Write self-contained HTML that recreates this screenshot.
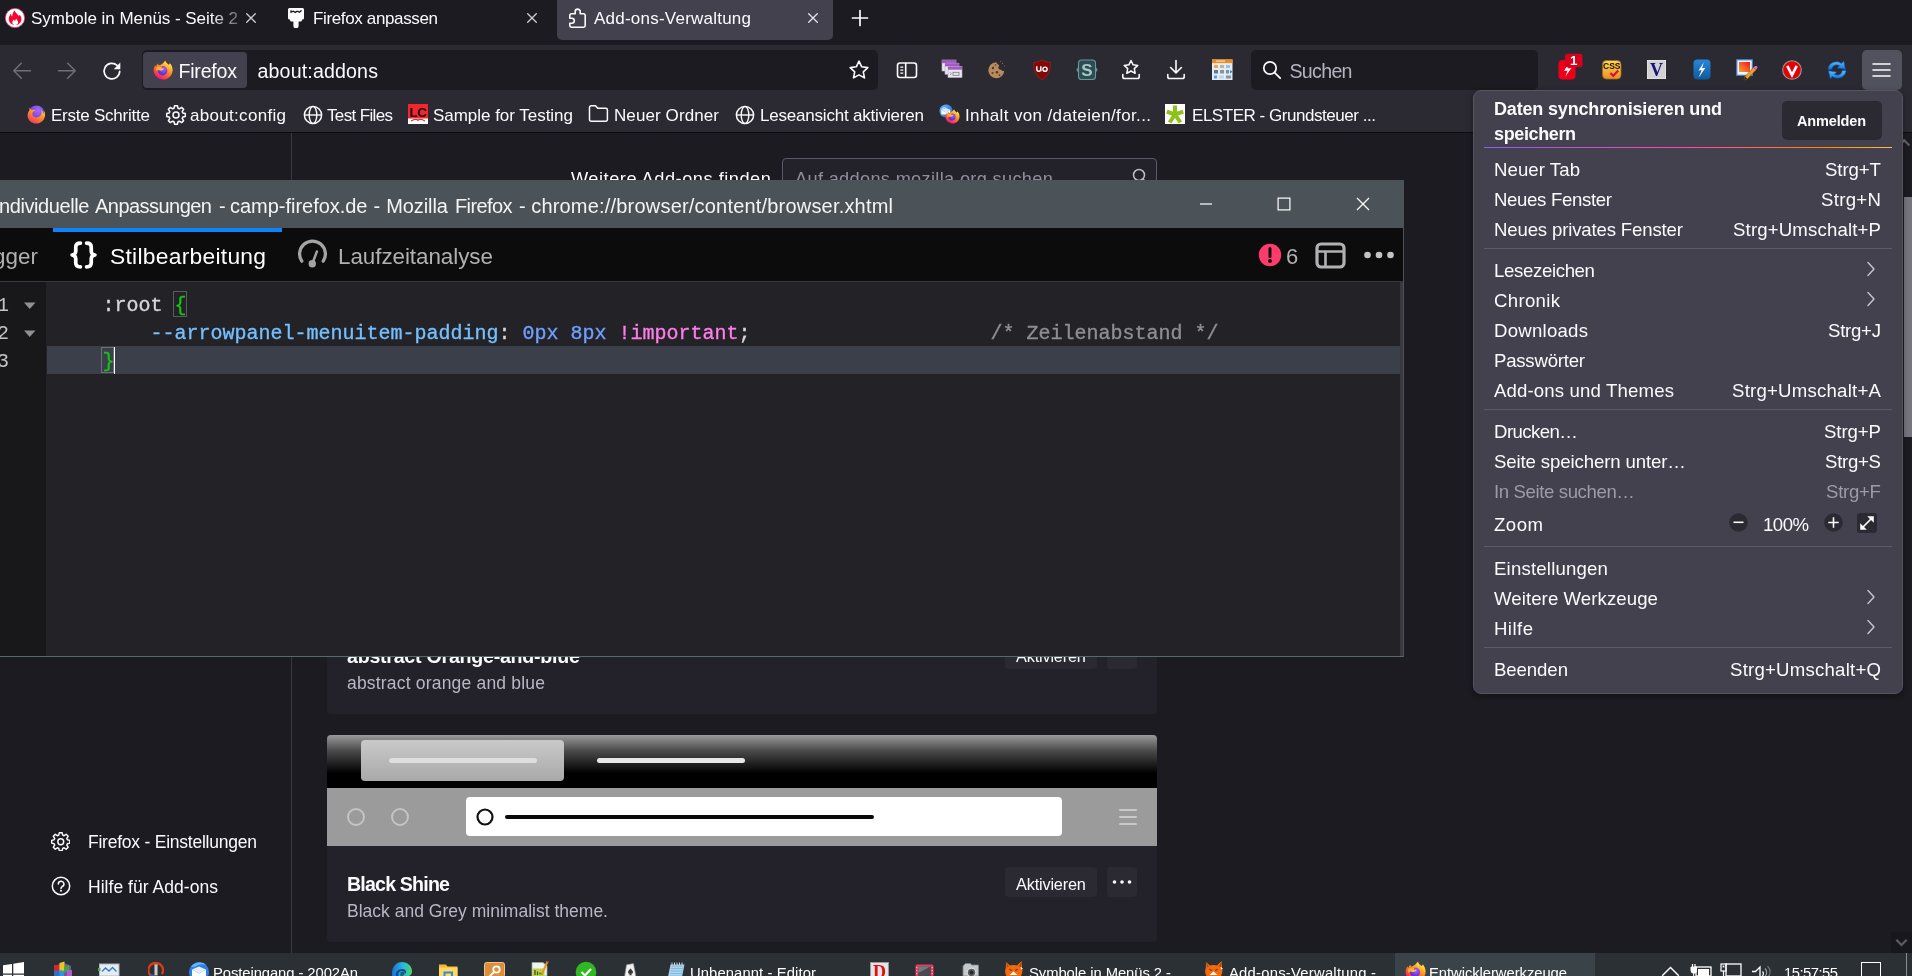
<!DOCTYPE html>
<html><head><meta charset="utf-8"><title>Add-ons-Verwaltung</title>
<style>
html,body{margin:0;padding:0;background:#1c1b22;}
body{width:1912px;height:976px;position:relative;overflow:hidden;font-family:"Liberation Sans",sans-serif;}
#w{left:0;top:0;width:1912px;height:976px;overflow:hidden;transform:translateZ(0);will-change:transform;}
body div,body svg{position:absolute;box-sizing:border-box;}
</style></head><body><div id="w">
<div style="left:0px;top:133px;width:1912px;height:820px;background:#1c1b22;"></div>
<div style="left:291px;top:133px;width:1px;height:820px;background:#393842;"></div>
<div style="left:571px;top:167.00px;font:18.2px/25px 'Liberation Sans',sans-serif;color:#fbfbfe;letter-spacing:0.530px;white-space:pre;">Weitere Add-ons finden</div>
<div style="left:782px;top:158px;width:375px;height:42px;background:#23222b;border:1px solid #5b5a66;border-radius:4px;"></div>
<div style="left:795px;top:166.50px;font:18.2px/25px 'Liberation Sans',sans-serif;color:#8f8e9b;letter-spacing:0.325px;white-space:pre;">Auf addons.mozilla.org suchen</div>
<svg style="left:1131px;top:167px;" width="18" height="18" viewBox="0 0 18 18"><circle cx="8" cy="8" r="5.5" fill="none" stroke="#bfbfc9" stroke-width="1.5"/><path d="M12 12l4 4" stroke="#bfbfc9" stroke-width="1.5"/></svg>
<div style="left:327px;top:560px;width:830px;height:154px;background:#23222b;border-radius:4px;"></div>
<div style="left:347px;top:642.50px;font:bold 19.6px/27px 'Liberation Sans',sans-serif;color:#fbfbfe;letter-spacing:-0.240px;white-space:pre;">abstract Orange-and-blue</div>
<div style="left:347px;top:671.00px;font:17.5px/24px 'Liberation Sans',sans-serif;color:#b8b7c4;letter-spacing:0.191px;white-space:pre;">abstract orange and blue</div>
<div style="left:1005px;top:639px;width:92px;height:30px;background:#2b2a33;border-radius:4px;"></div>
<div style="left:1016px;top:644.50px;font:16.3px/23px 'Liberation Sans',sans-serif;color:#fbfbfe;letter-spacing:-0.174px;white-space:pre;">Aktivieren</div>
<div style="left:1107px;top:639px;width:30px;height:30px;background:#2b2a33;border-radius:4px;"></div>
<div style="left:327px;top:735px;width:830px;height:207px;background:#23222b;border-radius:4px;"></div>
<div style="left:327px;top:735px;width:830px;height:53px;background:linear-gradient(#9a9a9a 0%,#4a4a4a 30%,#000 72%,#000 100%);border-radius:4px 4px 0 0;"></div>
<div style="left:327px;top:788px;width:830px;height:58px;background:#9b9b9b;"></div>
<div style="left:361px;top:740px;width:203px;height:41px;background:linear-gradient(#c9c9c9,#a9a9a9);border-radius:4px;"></div>
<div style="left:389px;top:758px;width:148px;height:5px;background:#dedede;border-radius:3px;"></div>
<div style="left:597px;top:758px;width:148px;height:5px;background:#e6e6e6;border-radius:3px;"></div>
<svg style="left:346px;top:807px;" width="20" height="20" viewBox="0 0 20 20"><circle cx="10" cy="10" r="8" fill="none" stroke="#c4c4c4" stroke-width="2"/></svg>
<svg style="left:390px;top:807px;" width="20" height="20" viewBox="0 0 20 20"><circle cx="10" cy="10" r="8" fill="none" stroke="#c4c4c4" stroke-width="2"/></svg>
<div style="left:466px;top:797px;width:596px;height:39px;background:#fff;border-radius:4px;"></div>
<svg style="left:475px;top:807px;" width="20" height="20" viewBox="0 0 20 20"><circle cx="10" cy="10" r="7.5" fill="none" stroke="#111" stroke-width="2.2"/></svg>
<div style="left:505px;top:815px;width:369px;height:4px;background:#0a0a0a;border-radius:2px;"></div>
<svg style="left:1118px;top:807px;" width="20" height="20" viewBox="0 0 20 20"><path d="M2 3h16M2 10h16M2 17h16" stroke="#c9c9c9" stroke-width="2" stroke-linecap="round"/></svg>
<div style="left:347px;top:870.50px;font:bold 19.6px/27px 'Liberation Sans',sans-serif;color:#fbfbfe;letter-spacing:-0.811px;white-space:pre;">Black Shine</div>
<div style="left:347px;top:899.00px;font:17.5px/24px 'Liberation Sans',sans-serif;color:#b8b7c4;letter-spacing:0.011px;white-space:pre;">Black and Grey minimalist theme.</div>
<div style="left:1005px;top:867px;width:92px;height:30px;background:#2b2a33;border-radius:4px;"></div>
<div style="left:1016px;top:872.50px;font:16.3px/23px 'Liberation Sans',sans-serif;color:#fbfbfe;letter-spacing:-0.174px;white-space:pre;">Aktivieren</div>
<div style="left:1107px;top:867px;width:30px;height:30px;background:#2b2a33;border-radius:4px;"></div>
<svg style="left:1112px;top:879px;" width="20" height="6" viewBox="0 0 20 6"><circle cx="2.5" cy="3" r="1.800" fill="#fbfbfe"/><circle cx="10" cy="3" r="1.800" fill="#fbfbfe"/><circle cx="17.500" cy="3" r="1.800" fill="#fbfbfe"/></svg>
<div style="left:88px;top:830.00px;font:17.5px/24px 'Liberation Sans',sans-serif;color:#fbfbfe;letter-spacing:-0.233px;white-space:pre;">Firefox - Einstellungen</div>
<div style="left:88px;top:875.00px;font:17.5px/24px 'Liberation Sans',sans-serif;color:#fbfbfe;letter-spacing:0.039px;white-space:pre;">Hilfe für Add-ons</div>
<div style="left:1903px;top:133px;width:9px;height:820px;background:#1c1b22;"></div>
<div style="left:1904px;top:197px;width:8px;height:240px;background:#77767e;"></div>
<div style="left:0px;top:0px;width:1912px;height:45px;background:#1c1b22;"></div>
<div style="left:0px;top:45px;width:1912px;height:87px;background:#2b2a33;"></div>
<div style="left:0px;top:132px;width:1912px;height:1px;background:#0c0c0d;"></div>
<div style="left:557px;top:0px;width:276px;height:40px;background:#42414d;border-radius:0 0 5px 5px;"></div>
<div style="left:31px;top:7.00px;font:17px/24px 'Liberation Sans',sans-serif;color:#fbfbfe;letter-spacing:-0.035px;white-space:pre;">Symbole in Menüs - Seite 2</div>
<div style="left:210px;top:4px;width:32px;height:30px;background:linear-gradient(90deg,rgba(28,27,34,0),rgba(28,27,34,.75));"></div>
<div style="left:313px;top:7.00px;font:17px/24px 'Liberation Sans',sans-serif;color:#fbfbfe;letter-spacing:-0.361px;white-space:pre;">Firefox anpassen</div>
<div style="left:594px;top:7.00px;font:17px/24px 'Liberation Sans',sans-serif;color:#fbfbfe;letter-spacing:0.230px;white-space:pre;">Add-ons-Verwaltung</div>
<div style="left:142px;top:50px;width:736px;height:40px;background:#1c1b22;border-radius:5px;"></div>
<div style="left:143px;top:52px;width:104px;height:36px;background:#42414d;border-radius:4px;"></div>
<div style="left:178.5px;top:58.10px;font:19.6px/27px 'Liberation Sans',sans-serif;color:#fbfbfe;letter-spacing:-0.234px;white-space:pre;">Firefox</div>
<div style="left:257.5px;top:58.10px;font:19.6px/27px 'Liberation Sans',sans-serif;color:#fbfbfe;letter-spacing:0.155px;white-space:pre;">about:addons</div>
<div style="left:1251px;top:50px;width:287px;height:40px;background:#1c1b22;border-radius:5px;"></div>
<div style="left:1289.5px;top:58.10px;font:19.6px/27px 'Liberation Sans',sans-serif;color:#b4b3bf;letter-spacing:-0.696px;white-space:pre;">Suchen</div>
<div style="left:1862px;top:50px;width:40px;height:40px;background:#52525e;border-radius:5px;"></div>
<svg style="left:1872px;top:62px;" width="20" height="16" viewBox="0 0 20 16"><path d="M1 2h17M1 8h17M1 14h17" stroke="#fbfbfe" stroke-width="1.6" stroke-linecap="round"/></svg>
<div style="left:51px;top:103.70px;font:17px/24px 'Liberation Sans',sans-serif;color:#fbfbfe;letter-spacing:-0.234px;white-space:pre;">Erste Schritte</div>
<div style="left:190px;top:103.70px;font:17px/24px 'Liberation Sans',sans-serif;color:#fbfbfe;letter-spacing:0.306px;white-space:pre;">about:config</div>
<div style="left:327px;top:103.70px;font:17px/24px 'Liberation Sans',sans-serif;color:#fbfbfe;letter-spacing:-0.644px;white-space:pre;">Test Files</div>
<div style="left:433px;top:103.70px;font:17px/24px 'Liberation Sans',sans-serif;color:#fbfbfe;letter-spacing:-0.029px;white-space:pre;">Sample for Testing</div>
<div style="left:614px;top:103.70px;font:17px/24px 'Liberation Sans',sans-serif;color:#fbfbfe;letter-spacing:0.097px;white-space:pre;">Neuer Ordner</div>
<div style="left:760px;top:103.70px;font:17px/24px 'Liberation Sans',sans-serif;color:#fbfbfe;letter-spacing:-0.201px;white-space:pre;">Leseansicht aktivieren</div>
<div style="left:965px;top:103.70px;font:17px/24px 'Liberation Sans',sans-serif;color:#fbfbfe;letter-spacing:0.371px;white-space:pre;">Inhalt von /dateien/for...</div>
<div style="left:1192px;top:103.70px;font:17px/24px 'Liberation Sans',sans-serif;color:#fbfbfe;letter-spacing:-0.462px;white-space:pre;">ELSTER - Grundsteuer ...</div>
<div style="left:-1px;top:180px;width:1405px;height:477px;background:#232327;border:1px solid #4b5358;border-bottom-color:#5c676c;"></div>
<div style="left:-1px;top:180px;width:1405px;height:48px;background:#4b5358;"></div>
<div style="left:-1px;top:191.70px;font:20px/28px 'Liberation Sans',sans-serif;color:#f4f4f4;letter-spacing:-0.402px;white-space:pre;">ndividuelle</div>
<div style="left:95px;top:191.70px;font:20px/28px 'Liberation Sans',sans-serif;color:#f4f4f4;letter-spacing:-0.533px;white-space:pre;">Anpassungen</div>
<div style="left:219px;top:191.70px;font:20px/28px 'Liberation Sans',sans-serif;color:#f4f4f4;letter-spacing:0.000px;white-space:pre;">-</div>
<div style="left:230px;top:191.70px;font:20px/28px 'Liberation Sans',sans-serif;color:#f4f4f4;letter-spacing:-0.024px;white-space:pre;">camp-firefox.de</div>
<div style="left:373.5px;top:191.70px;font:20px/28px 'Liberation Sans',sans-serif;color:#f4f4f4;letter-spacing:0.000px;white-space:pre;">-</div>
<div style="left:386.2px;top:191.70px;font:20px/28px 'Liberation Sans',sans-serif;color:#f4f4f4;letter-spacing:-0.073px;white-space:pre;">Mozilla</div>
<div style="left:455px;top:191.70px;font:20px/28px 'Liberation Sans',sans-serif;color:#f4f4f4;letter-spacing:-0.604px;white-space:pre;">Firefox</div>
<div style="left:519px;top:191.70px;font:20px/28px 'Liberation Sans',sans-serif;color:#f4f4f4;letter-spacing:0.000px;white-space:pre;">-</div>
<div style="left:531.2px;top:191.70px;font:20px/28px 'Liberation Sans',sans-serif;color:#f4f4f4;letter-spacing:0.195px;white-space:pre;">chrome://browser/content/browser.xhtml</div>
<div style="left:0px;top:228px;width:1403px;height:53px;background:#0c0c0d;"></div>
<div style="left:0px;top:281px;width:1403px;height:1px;background:#38383d;"></div>
<div style="left:53px;top:228px;width:229px;height:4px;background:#0a84ff;"></div>
<div style="left:-7px;top:240.50px;font:22.4px/31px 'Liberation Sans',sans-serif;color:#b1b1b3;letter-spacing:0.055px;white-space:pre;">gger</div>
<div style="left:110px;top:240.00px;font:22.8px/32px 'Liberation Sans',sans-serif;color:#ffffff;letter-spacing:0.278px;white-space:pre;">Stilbearbeitung</div>
<div style="left:338px;top:240.50px;font:22.4px/31px 'Liberation Sans',sans-serif;color:#b1b1b3;letter-spacing:-0.048px;white-space:pre;">Laufzeitanalyse</div>
<div style="left:1286px;top:240.50px;font:22px/31px 'Liberation Sans',sans-serif;color:#b1b1b3;letter-spacing:0.000px;white-space:pre;">6</div>
<div style="left:0px;top:282px;width:46px;height:374px;background:#18181a;"></div>
<div style="left:47px;top:346px;width:1353px;height:28px;background:#3b3f4a;"></div>
<div style="left:1400px;top:282px;width:3px;height:374px;background:#38383d;"></div>
<div style="left:102.4px;top:292.00px;font:20px/28px 'Liberation Mono',monospace;color:#d7d7db;letter-spacing:0.000px;white-space:pre;-webkit-text-stroke:.35px #d7d7db;">:root</div>
<div style="left:174.4px;top:292.00px;font:20px/28px 'Liberation Mono',monospace;color:#14c414;letter-spacing:0.000px;white-space:pre;-webkit-text-stroke:.35px #14c414;">{</div>
<div style="left:150.4px;top:320.00px;font:20px/28px 'Liberation Mono',monospace;color:#75bfff;letter-spacing:0.000px;white-space:pre;-webkit-text-stroke:.35px #75bfff;">--arrowpanel-menuitem-padding</div>
<div style="left:498.4px;top:320.00px;font:20px/28px 'Liberation Mono',monospace;color:#d7d7db;letter-spacing:0.000px;white-space:pre;-webkit-text-stroke:.35px #d7d7db;">:</div>
<div style="left:522.4px;top:320.00px;font:20px/28px 'Liberation Mono',monospace;color:#709fff;letter-spacing:0.000px;white-space:pre;-webkit-text-stroke:.35px #709fff;">0px 8px</div>
<div style="left:618.4px;top:320.00px;font:20px/28px 'Liberation Mono',monospace;color:#ff7de9;letter-spacing:0.000px;white-space:pre;-webkit-text-stroke:.35px #ff7de9;">!important</div>
<div style="left:738.4px;top:320.00px;font:20px/28px 'Liberation Mono',monospace;color:#d7d7db;letter-spacing:0.000px;white-space:pre;-webkit-text-stroke:.35px #d7d7db;">;</div>
<div style="left:990.4px;top:320.00px;font:20px/28px 'Liberation Mono',monospace;color:#8d8d93;letter-spacing:0.000px;white-space:pre;-webkit-text-stroke:.35px #8d8d93;">/* Zeilenabstand */</div>
<div style="left:102.4px;top:348.00px;font:20px/28px 'Liberation Mono',monospace;color:#14c414;letter-spacing:0.000px;white-space:pre;-webkit-text-stroke:.35px #14c414;">}</div>
<div style="left:-3px;top:292.00px;font:20px/28px 'Liberation Mono',monospace;color:#c4c4c8;letter-spacing:-1.002px;white-space:pre;">1</div>
<div style="left:-3px;top:320.00px;font:20px/28px 'Liberation Mono',monospace;color:#c4c4c8;letter-spacing:-1.002px;white-space:pre;">2</div>
<div style="left:-3px;top:348.00px;font:20px/28px 'Liberation Mono',monospace;color:#c4c4c8;letter-spacing:-1.002px;white-space:pre;">3</div>
<div style="left:1473px;top:90px;width:430px;height:604px;background:#42414d;border-radius:8px;border:1px solid #55545f;box-shadow:0 2px 6px rgba(0,0,0,.35);"></div>
<div style="left:1494px;top:96.50px;font:bold 18px/25px 'Liberation Sans',sans-serif;color:#fbfbfe;letter-spacing:-0.169px;white-space:pre;">Daten synchronisieren und</div>
<div style="left:1494px;top:122.20px;font:bold 18px/25px 'Liberation Sans',sans-serif;color:#fbfbfe;letter-spacing:-0.379px;white-space:pre;">speichern</div>
<div style="left:1782px;top:101px;width:100px;height:39px;background:#2b2a33;border-radius:5px;"></div>
<div style="left:1797px;top:111.00px;font:bold 14.5px/20px 'Liberation Sans',sans-serif;color:#fbfbfe;letter-spacing:-0.156px;white-space:pre;">Anmelden</div>
<div style="left:1484px;top:147px;width:408px;height:1px;background:linear-gradient(90deg,#9059ff 0%,#ff4aa2 52%,#ff8c00 85%,#ffbd4f 100%);"></div>
<div style="left:1494px;top:157.00px;font:18.6px/26px 'Liberation Sans',sans-serif;color:#fbfbfe;letter-spacing:0.065px;white-space:pre;">Neuer Tab</div>
<div style="left:1825px;top:157.00px;font:18.6px/26px 'Liberation Sans',sans-serif;color:#fbfbfe;letter-spacing:-0.068px;white-space:pre;">Strg+T</div>
<div style="left:1494px;top:187.00px;font:18.6px/26px 'Liberation Sans',sans-serif;color:#fbfbfe;letter-spacing:-0.333px;white-space:pre;">Neues Fenster</div>
<div style="left:1821px;top:187.00px;font:18.6px/26px 'Liberation Sans',sans-serif;color:#fbfbfe;letter-spacing:0.318px;white-space:pre;">Strg+N</div>
<div style="left:1494px;top:217.00px;font:18.6px/26px 'Liberation Sans',sans-serif;color:#fbfbfe;letter-spacing:-0.157px;white-space:pre;">Neues privates Fenster</div>
<div style="left:1733px;top:217.00px;font:18.6px/26px 'Liberation Sans',sans-serif;color:#fbfbfe;letter-spacing:0.160px;white-space:pre;">Strg+Umschalt+P</div>
<div style="left:1494px;top:258.00px;font:18.6px/26px 'Liberation Sans',sans-serif;color:#fbfbfe;letter-spacing:-0.345px;white-space:pre;">Lesezeichen</div>
<svg style="left:1865px;top:261px;" width="12" height="16" viewBox="0 0 12 16"><path d="M3 1.5l6 6.5-6 6.5" fill="none" stroke="#c8c7d2" stroke-width="1.4" stroke-linecap="round" stroke-linejoin="round"/></svg>
<div style="left:1494px;top:288.00px;font:18.6px/26px 'Liberation Sans',sans-serif;color:#fbfbfe;letter-spacing:0.318px;white-space:pre;">Chronik</div>
<svg style="left:1865px;top:291px;" width="12" height="16" viewBox="0 0 12 16"><path d="M3 1.5l6 6.5-6 6.5" fill="none" stroke="#c8c7d2" stroke-width="1.4" stroke-linecap="round" stroke-linejoin="round"/></svg>
<div style="left:1494px;top:318.00px;font:18.6px/26px 'Liberation Sans',sans-serif;color:#fbfbfe;letter-spacing:0.247px;white-space:pre;">Downloads</div>
<div style="left:1828px;top:318.00px;font:18.6px/26px 'Liberation Sans',sans-serif;color:#fbfbfe;letter-spacing:-0.255px;white-space:pre;">Strg+J</div>
<div style="left:1494px;top:348.00px;font:18.6px/26px 'Liberation Sans',sans-serif;color:#fbfbfe;letter-spacing:-0.226px;white-space:pre;">Passwörter</div>
<div style="left:1494px;top:378.00px;font:18.6px/26px 'Liberation Sans',sans-serif;color:#fbfbfe;letter-spacing:0.147px;white-space:pre;">Add-ons und Themes</div>
<div style="left:1732px;top:378.00px;font:18.6px/26px 'Liberation Sans',sans-serif;color:#fbfbfe;letter-spacing:0.231px;white-space:pre;">Strg+Umschalt+A</div>
<div style="left:1494px;top:419.00px;font:18.6px/26px 'Liberation Sans',sans-serif;color:#fbfbfe;letter-spacing:-0.552px;white-space:pre;">Drucken…</div>
<div style="left:1824px;top:419.00px;font:18.6px/26px 'Liberation Sans',sans-serif;color:#fbfbfe;letter-spacing:-0.076px;white-space:pre;">Strg+P</div>
<div style="left:1494px;top:449.00px;font:18.6px/26px 'Liberation Sans',sans-serif;color:#fbfbfe;letter-spacing:-0.113px;white-space:pre;">Seite speichern unter…</div>
<div style="left:1825px;top:449.00px;font:18.6px/26px 'Liberation Sans',sans-serif;color:#fbfbfe;letter-spacing:-0.276px;white-space:pre;">Strg+S</div>
<div style="left:1494px;top:479.00px;font:18.6px/26px 'Liberation Sans',sans-serif;color:#9c9ba6;letter-spacing:-0.388px;white-space:pre;">In Seite suchen…</div>
<div style="left:1826px;top:479.00px;font:18.6px/26px 'Liberation Sans',sans-serif;color:#9c9ba6;letter-spacing:-0.268px;white-space:pre;">Strg+F</div>
<div style="left:1494px;top:512.00px;font:18.6px/26px 'Liberation Sans',sans-serif;color:#fbfbfe;letter-spacing:0.485px;white-space:pre;">Zoom</div>
<div style="left:1494px;top:556.00px;font:18.6px/26px 'Liberation Sans',sans-serif;color:#fbfbfe;letter-spacing:0.193px;white-space:pre;">Einstellungen</div>
<div style="left:1494px;top:586.00px;font:18.6px/26px 'Liberation Sans',sans-serif;color:#fbfbfe;letter-spacing:0.084px;white-space:pre;">Weitere Werkzeuge</div>
<svg style="left:1865px;top:589px;" width="12" height="16" viewBox="0 0 12 16"><path d="M3 1.5l6 6.5-6 6.5" fill="none" stroke="#c8c7d2" stroke-width="1.4" stroke-linecap="round" stroke-linejoin="round"/></svg>
<div style="left:1494px;top:616.00px;font:18.6px/26px 'Liberation Sans',sans-serif;color:#fbfbfe;letter-spacing:0.447px;white-space:pre;">Hilfe</div>
<svg style="left:1865px;top:619px;" width="12" height="16" viewBox="0 0 12 16"><path d="M3 1.5l6 6.5-6 6.5" fill="none" stroke="#c8c7d2" stroke-width="1.4" stroke-linecap="round" stroke-linejoin="round"/></svg>
<div style="left:1494px;top:657.00px;font:18.6px/26px 'Liberation Sans',sans-serif;color:#fbfbfe;letter-spacing:-0.079px;white-space:pre;">Beenden</div>
<div style="left:1730px;top:657.00px;font:18.6px/26px 'Liberation Sans',sans-serif;color:#fbfbfe;letter-spacing:0.227px;white-space:pre;">Strg+Umschalt+Q</div>
<div style="left:1484px;top:248px;width:408px;height:1px;background:#5b5a66;"></div>
<div style="left:1484px;top:409px;width:408px;height:1px;background:#5b5a66;"></div>
<div style="left:1484px;top:546px;width:408px;height:1px;background:#5b5a66;"></div>
<div style="left:1484px;top:647px;width:408px;height:1px;background:#5b5a66;"></div>
<div style="left:1763px;top:511.70px;font:18.6px/26px 'Liberation Sans',sans-serif;color:#fbfbfe;letter-spacing:-0.524px;white-space:pre;">100%</div>
<svg style="left:1728.5px;top:512.5px;" width="19" height="19" viewBox="0 0 19 19"><circle cx="9.5" cy="9.5" r="9.3" fill="#2b2a33"/><path d="M4.500 9.300h10" stroke="#fbfbfe" stroke-width="1.600"/></svg>
<svg style="left:1823.5px;top:512.5px;" width="19" height="19" viewBox="0 0 19 19"><circle cx="9.500" cy="9.500" r="9.300" fill="#2b2a33"/><path d="M4.300 9.500h10.400M9.500 4.300v10.400" stroke="#fbfbfe" stroke-width="1.600"/></svg>
<svg style="left:1857px;top:513px;" width="20" height="20" viewBox="0 0 20 20"><rect width="20" height="20" rx="3" fill="#2b2a33"/><path d="M5.500 14.500l9-9" stroke="#fbfbfe" stroke-width="1.700"/><path d="M10.200 3.200h6.600v6.600zM3.200 10.200v6.600h6.600z" fill="#fbfbfe"/></svg>
<div style="left:0px;top:953px;width:1912px;height:23px;background:#2b3035;"></div>
<div style="left:1395px;top:953px;width:200px;height:23px;background:#3a4448;"></div>
<div style="left:213px;top:963.10px;font:14.8px/21px 'Liberation Sans',sans-serif;color:#fff;letter-spacing:-0.078px;white-space:pre;">Posteingang - 2002An</div>
<div style="left:690px;top:963.10px;font:14.8px/21px 'Liberation Sans',sans-serif;color:#fff;letter-spacing:0.104px;white-space:pre;">Unbenannt - Editor</div>
<div style="left:1029px;top:963.10px;font:14.8px/21px 'Liberation Sans',sans-serif;color:#fff;letter-spacing:-0.060px;white-space:pre;">Symbole in Menüs 2 -</div>
<div style="left:1229px;top:963.10px;font:14.8px/21px 'Liberation Sans',sans-serif;color:#fff;letter-spacing:0.246px;white-space:pre;">Add-ons-Verwaltung -</div>
<div style="left:1429px;top:963.10px;font:14.8px/21px 'Liberation Sans',sans-serif;color:#fff;letter-spacing:-0.056px;white-space:pre;">Entwicklerwerkzeuge</div>
<div style="left:1784px;top:963.10px;font:14.8px/21px 'Liberation Sans',sans-serif;color:#fff;letter-spacing:-0.516px;white-space:pre;">15:57:55</div>
<div style="left:1906px;top:953px;width:1px;height:23px;background:#8a8e92;"></div>
<svg style="left:5px;top:7.6px;" width="20" height="20" viewBox="0 0 20 20"><circle cx="10" cy="10" r="9.6" fill="#fff" stroke="#f0506a" stroke-width=".8"/><path d="M9.6 2.6c.6 2.4 3.2 3.6 4.3 5.6.4-.5.5-1.100.4-1.800 1.700 1.600 2.400 3.500 2.100 5.600-.400 2.900-2.900 5-6.200 5-3.700 0-6.400-2.600-6.400-6 0-2.100 1-3.800 2.300-5.200 0 1.200.3 2.100 1.100 2.800.1-2.400.9-4.400 2.400-6z" fill="#f5052f"/><path d="M10.300 17c-1.800 0-3-1.100-3-2.600 0-1.300.9-2.100 1.600-3 .2.800.6 1.300 1.200 1.600.2-.9.600-1.600 1.300-2.200.200 1.100 1.800 2 1.800 3.700 0 1.500-1.200 2.500-2.900 2.500z" fill="#fff"/></svg>
<svg style="left:245px;top:11.600000000000001px;" width="12" height="12" viewBox="0 0 12 12"><path d="M1.700 1.700l8.600 8.600M10.300 1.700l-8.600 8.600" stroke="#cfcfd8" stroke-width="1.300" stroke-linecap="round"/></svg>
<svg style="left:526px;top:11.600000000000001px;" width="12" height="12" viewBox="0 0 12 12"><path d="M1.700 1.700l8.600 8.600M10.300 1.700l-8.600 8.600" stroke="#cfcfd8" stroke-width="1.300" stroke-linecap="round"/></svg>
<svg style="left:807px;top:11.600000000000001px;" width="12" height="12" viewBox="0 0 12 12"><path d="M1.700 1.700l8.600 8.600M10.300 1.700l-8.600 8.600" stroke="#e4e4ec" stroke-width="1.300" stroke-linecap="round"/></svg>
<svg style="left:288px;top:8px;" width="16" height="20" viewBox="0 0 16 20"><path d="M1.500 0H14.500a1.500 1.500 0 0 1 1.500 1.500V10a1.500 1.500 0 0 1-1.500 1.500H14v.5a1.500 1.500 0 0 1-1.500 1.500H10.600v4.200a2.600 2.600 0 0 1-5.200 0V13.500H3.500A1.500 1.500 0 0 1 2 12v-.5H1.500A1.500 1.500 0 0 1 0 10V1.500A1.500 1.500 0 0 1 1.500 0z" fill="#fbfbfe"/><path d="M3 2.200v2l2.200-1 2 1.200 2-1.200 2.200 1 1.600-1.200v-1" fill="none" stroke="#1c1b22" stroke-width="1.300"/></svg>
<svg style="left:568px;top:7px;" width="19" height="22" viewBox="0 0 19 22"><path d="M7.200 6.800V4.600a2.500 2.500 0 0 1 5 0V6.800H15.600a1.600 1.600 0 0 1 1.600 1.600V18.600a1.600 1.600 0 0 1-1.600 1.600H3.400a1.600 1.600 0 0 1-1.600-1.600V16.200H3.800a2.500 2.500 0 0 0 0-5H1.800V8.400A1.600 1.600 0 0 1 3.400 6.800z" fill="none" stroke="#fbfbfe" stroke-width="1.600" stroke-linejoin="round"/></svg>
<svg style="left:851px;top:9px;" width="18" height="18" viewBox="0 0 18 18"><path d="M9 1.500v15M1.500 9h15" stroke="#fbfbfe" stroke-width="1.700" stroke-linecap="round"/></svg>
<svg style="left:12px;top:61px;" width="20" height="20" viewBox="0 0 20 20"><path d="M18.500 9.700H2M9.300 2.200L1.800 9.700l7.500 7.500" fill="none" stroke="#6f6e7a" stroke-width="1.500" stroke-linecap="round" stroke-linejoin="round"/></svg>
<svg style="left:57px;top:61px;" width="20" height="20" viewBox="0 0 20 20"><path d="M1.500 9.700H18M10.700 2.200l7.500 7.500-7.500 7.500" fill="none" stroke="#6f6e7a" stroke-width="1.500" stroke-linecap="round" stroke-linejoin="round"/></svg>
<svg style="left:101px;top:60px;" width="22" height="22" viewBox="0 0 22 22"><path d="M18.700 11.300a7.800 7.800 0 1 1-2.600-6" fill="none" stroke="#fbfbfe" stroke-width="1.700" stroke-linecap="round"/><path d="M19.300 2.600v6.600h-6.600z" fill="#fbfbfe"/></svg>
<svg style="left:153px;top:60px;" width="20" height="20" viewBox="0 0 20 20"><defs><linearGradient id="ffga" x1="0.800" y1="0.050" x2="0.250" y2="0.950"><stop offset="0" stop-color="#fff44f"/><stop offset=".3" stop-color="#ffb224"/><stop offset=".6" stop-color="#ff6a2e"/><stop offset=".85" stop-color="#ff3355"/><stop offset="1" stop-color="#e9119a"/></linearGradient><radialGradient id="ffpa" cx=".6" cy=".3" r=".8"><stop offset="0" stop-color="#b25cff"/><stop offset=".6" stop-color="#6a3be0"/><stop offset="1" stop-color="#4428b8"/></radialGradient><linearGradient id="ffha" x1="0" y1="0" x2="1" y2="1"><stop offset="0" stop-color="#ff9a1a"/><stop offset="1" stop-color="#ffd43a"/></linearGradient></defs><path d="M12.300.400c.300 1.700 2 2.900 3.300 4.400.800-.300 1.200-.900 1.100-1.700 2 2 3.100 4.700 2.900 7.600-.400 5-4.500 8.800-9.500 8.800S.600 15.600.600 10.600c0-2.200.700-4.100 1.900-5.600.1.800.3 1.400.700 1.900.2-1.500.9-2.600 1.900-3.400 0 .700.200 1.300.600 1.800 1.700-.300 4.200-1.300 6.600-4.900z" fill="url(#ffga)"/><circle cx="9.600" cy="10.800" r="4.700" fill="url(#ffpa)"/><path d="M3.300 7.200c1.100-.700 2.500-.700 3.500-.2.600-.700 1.700-1 2.800-.8-.9.500-1.300 1.300-1.200 2.100 1.100.3 2 .100 2.600-.400-.200 1.500-1.400 2.500-2.900 2.600-1.300.1-2-.600-3.200-.400-.800.100-1.300.500-1.600 1.100-.500-1.300-.500-2.800 0-4z" fill="url(#ffha)"/></svg>
<svg style="left:848px;top:59px;" width="22" height="22" viewBox="0 0 22 22"><path d="M11 2.200l2.700 5.600 6.100.8-4.500 4.200 1.200 6.100L11 15.900l-5.500 3 1.200-6.100L2.200 8.600l6.100-.8z" fill="none" stroke="#fbfbfe" stroke-width="1.600" stroke-linejoin="round"/></svg>
<svg style="left:896px;top:61px;" width="22" height="18" viewBox="0 0 22 18"><rect x="1.500" y="2" width="19" height="14.500" rx="2.500" fill="none" stroke="#fbfbfe" stroke-width="1.600"/><path d="M9.700 2v14.500" stroke="#fbfbfe" stroke-width="1.600"/><path d="M4.300 6.200h3M4.300 9.200h3M4.300 12.200h3" stroke="#fbfbfe" stroke-width="1.300"/></svg>
<svg style="left:941px;top:59px;" width="22" height="20" viewBox="0 0 22 20"><rect x="1" y="1" width="14" height="11" fill="#e9e6ee" stroke="#b9b2c4" stroke-width=".6"/><rect x="1" y="1" width="14" height="3.200" fill="#a05cc0"/><rect x="4" y="4.2" width="14" height="11" fill="#e9e6ee" stroke="#b9b2c4" stroke-width=".6"/><rect x="4" y="4.2" width="14" height="3.200" fill="#a05cc0"/><rect x="7" y="7.5" width="14" height="11" fill="#e9e6ee" stroke="#b9b2c4" stroke-width=".6"/><rect x="7" y="7.5" width="14" height="3.200" fill="#a05cc0"/><rect x="12" y="13.300" width="6" height="3" fill="none" stroke="#7d7887" stroke-width=".8"/><path d="M9 13.300l1.300 1.400-1.300 1.400" fill="none" stroke="#7d7887" stroke-width=".8"/></svg>
<svg style="left:986px;top:59px;" width="22" height="22" viewBox="0 0 22 22"><path d="M10 3.200a8 8 0 1 0 8.300 8.600c-1.200.5-2.500 0-3-1.100-1.300.3-2.500-.4-2.800-1.600-.3-1.100.1-2 .9-2.600C12 5.600 11 4.600 10 3.200z" fill="#b98a5e"/><circle cx="7" cy="9" r="1.200" fill="#5a3a22"/><circle cx="11" cy="13.200" r="1.300" fill="#5a3a22"/><circle cx="6.500" cy="14" r="1" fill="#5a3a22"/><circle cx="13.500" cy="16.200" r=".9" fill="#5a3a22"/><circle cx="9.500" cy="6" r=".8" fill="#5a3a22"/><circle cx="16.500" cy="4.500" r=".7" fill="#8b6a4a"/><circle cx="18.500" cy="7" r=".6" fill="#8b6a4a"/><circle cx="14.500" cy="2.500" r=".6" fill="#8b6a4a"/></svg>
<svg style="left:1032px;top:59px;" width="20" height="22" viewBox="0 0 20 22"><path d="M10 .8c2.600 1.700 5.400 2.500 8.600 2.600 0 7.800-2.200 13.500-8.600 17.600C3.600 16.900 1.400 11.200 1.400 3.400 4.600 3.300 7.400 2.500 10 .8z" fill="#800a0a" stroke="#a32020" stroke-width=".7"/><path d="M4.800 7.300v3a2 2 0 0 0 4 0v-3M8.800 7.300v5" fill="none" stroke="#fff" stroke-width="1.400"/><circle cx="13" cy="10.200" r="2.100" fill="none" stroke="#fff" stroke-width="1.400"/></svg>
<svg style="left:1076px;top:59px;" width="22" height="22" viewBox="0 0 22 22"><rect x="2.500" y="1" width="17" height="19.500" rx="3" fill="#2c4c52" stroke="#6b979b" stroke-width="1.100"/><path d="M2.500 8.500L1 10.700l1.500 2.200M19.500 8.500L21 10.700l-1.500 2.200" fill="none" stroke="#6b979b" stroke-width="1.200"/><text x="11" y="17" font-family="Liberation Sans" font-weight="bold" font-size="17" fill="#a9c9c9" text-anchor="middle">S</text></svg>
<svg style="left:1121px;top:59px;" width="20" height="21" viewBox="0 0 20 21"><path d="M10 1.500l2.100 4.300 4.700.6-3.500 3.200.9 4.700L10 12l-4.200 2.300.9-4.700L3.200 6.400l4.700-.6z" fill="none" stroke="#fbfbfe" stroke-width="1.500" stroke-linejoin="round"/><path d="M1.800 15.500v2.200a1.800 1.800 0 0 0 1.800 1.800h12.800a1.800 1.800 0 0 0 1.800-1.800v-2.200" fill="none" stroke="#fbfbfe" stroke-width="1.600" stroke-linecap="round"/></svg>
<svg style="left:1166px;top:59px;" width="20" height="21" viewBox="0 0 20 21"><path d="M10 1.500v12M4.600 8.500L10 13.900l5.400-5.400" fill="none" stroke="#fbfbfe" stroke-width="1.600" stroke-linecap="round" stroke-linejoin="round"/><path d="M1.800 15.500v2.200a1.800 1.800 0 0 0 1.800 1.800h12.800a1.800 1.800 0 0 0 1.800-1.800v-2.200" fill="none" stroke="#fbfbfe" stroke-width="1.600" stroke-linecap="round"/></svg>
<svg style="left:1212px;top:59px;" width="21" height="22" viewBox="0 0 21 22"><rect x="0" y=".5" width="20.500" height="20.500" fill="#dfeefb"/><rect x="0" y=".5" width="20.500" height="3.600" fill="#f08a1c"/><rect x="4" y="1.500" width="9" height="1.200" fill="#ffd9a8"/><rect x="2" y="6" width="4" height="3" fill="#f3a54a"/><rect x="8" y="6" width="4" height="3" fill="#c9b28f"/><rect x="14" y="6" width="4" height="3" fill="#9fc0e6"/><rect x="2" y="11" width="4" height="3.500" fill="#6d7480"/><rect x="8" y="11" width="4" height="3.500" fill="#8a929c"/><rect x="14" y="11" width="3" height="3.500" fill="#7d8ea2"/><path d="M18 11l2.500 1.800L18 14.500z" fill="#2e7bd6"/><rect x="2" y="16.500" width="3" height="3" fill="#5b9de0"/><rect x="7" y="16.500" width="5" height="3" fill="#c8d2dc"/><rect x="14" y="16.500" width="5" height="3" fill="#8b939b"/></svg>
<svg style="left:1262px;top:60px;" width="20" height="20" viewBox="0 0 20 20"><circle cx="8" cy="8" r="6.200" fill="none" stroke="#fbfbfe" stroke-width="1.700"/><path d="M12.600 12.600l5.600 5.600" stroke="#fbfbfe" stroke-width="1.800" stroke-linecap="round"/></svg>
<svg style="left:1557px;top:53px;" width="27" height="28" viewBox="0 0 27 28"><rect x="1.500" y="7" width="17" height="19.500" rx="4" fill="#f00018"/><path d="M11.500 10.500l-4.500 7.500 3.600-.5-2.200 6 6-8.500-3.800.4z" fill="#fff"/><rect x="8" y=".8" width="17.500" height="13.500" rx="2.500" fill="#d7001d"/><text x="16.800" y="12.300" font-family="Liberation Sans" font-weight="bold" font-size="13.500" fill="#fff" text-anchor="middle">1</text></svg>
<svg style="left:1602px;top:60px;" width="20" height="20" viewBox="0 0 20 20"><defs><linearGradient id="cssg" x1="0" y1="0" x2="0" y2="1"><stop offset="0" stop-color="#ffd84a"/><stop offset="1" stop-color="#e8902a"/></linearGradient></defs><rect x=".5" y=".5" width="18.500" height="18.500" rx="4" fill="url(#cssg)" stroke="#a86414" stroke-width=".8"/><text x="9.800" y="9.300" font-family="Liberation Sans" font-weight="bold" font-size="8.500" fill="#111" text-anchor="middle">CSS</text><path d="M8.500 13l2.700 2.800 5-5.300" fill="none" stroke="#e01030" stroke-width="2.200"/></svg>
<svg style="left:1647px;top:60px;" width="19" height="19" viewBox="0 0 19 19"><rect x="0" y="0" width="19" height="19" fill="#d2d2d2" stroke="#efefef" stroke-width="1"/><text x="9.500" y="15.500" font-family="Liberation Serif" font-weight="bold" font-size="18" fill="#14147e" text-anchor="middle">V</text></svg>
<svg style="left:1693px;top:59px;" width="18" height="21" viewBox="0 0 18 21"><defs><linearGradient id="blg" x1="0" y1="0" x2="0" y2="1"><stop offset="0" stop-color="#2a86d8"/><stop offset="1" stop-color="#0c5aa0"/></linearGradient></defs><rect x=".5" y=".5" width="17" height="20" rx="4" fill="url(#blg)"/><path d="M10.800 3.500L5.500 11.500l3.200-.5-2.500 6.500 6.300-8.700-3.500.5z" fill="#fff"/><path d="M6.200 17.500l2.500-4" stroke="#ffd84a" stroke-width="1"/></svg>
<svg style="left:1736px;top:59px;" width="22" height="22" viewBox="0 0 22 22"><defs><linearGradient id="pcg" x1="1" y1="0" x2="0" y2="1"><stop offset="0" stop-color="#f01818"/><stop offset="1" stop-color="#f7a23a"/></linearGradient></defs><rect x=".8" y=".8" width="15.500" height="15.500" fill="#f6f6fa" stroke="#3f86d8" stroke-width="1.200"/><rect x="3" y="3" width="11" height="10" fill="url(#pcg)"/><path d="M8 21l1-3.500 8.500-9 2.500 2.400-8.600 9z" fill="#e9a020" stroke="#8a5a10" stroke-width=".6"/><path d="M17.500 8.500l1.300-1.300a1.500 1.500 0 0 1 2.200 2.200l-1 1.500z" fill="#e06ac0"/><path d="M8 21l1-3.500 2.400 2.400z" fill="#222"/></svg>
<svg style="left:1782px;top:60px;" width="20" height="20" viewBox="0 0 20 20"><circle cx="10" cy="10" r="9.300" fill="#e60000" stroke="#9a9a9a" stroke-width="1.100"/><path d="M5.300 5.800l4.700 9.400 4.700-9.400" fill="none" stroke="#fff" stroke-width="2.600" stroke-linejoin="miter"/></svg>
<svg style="left:1826px;top:59px;" width="22" height="22" viewBox="0 0 22 22"><defs><linearGradient id="syg" x1="0" y1="0" x2="0" y2="1"><stop offset="0" stop-color="#5fc3ff"/><stop offset="1" stop-color="#0f6fd6"/></linearGradient></defs><path d="M2 10.500C2.200 5.800 6 2.800 10.500 2.800c2 0 3.700.6 5 1.700L17.800 2l1.700 8.300-8.300-1.300 2.300-2.300c-.9-.5-1.900-.8-3-.8-2.500 0-4.400 1.800-4.700 4.500z" fill="url(#syg)" stroke="#0b4fa8" stroke-width=".6"/><path d="M20 11.500c-.2 4.700-4 7.700-8.500 7.700-2 0-3.700-.6-5-1.700L4.200 20 2.500 11.700l8.300 1.300-2.300 2.300c.9.500 1.900.8 3 .8 2.500 0 4.400-1.800 4.700-4.500z" fill="url(#syg)" stroke="#0b4fa8" stroke-width=".6"/></svg>
<svg style="left:26px;top:104px;" width="20" height="20" viewBox="0 0 20 20"><defs><radialGradient id="ofp" cx=".6" cy=".3" r=".8"><stop offset="0" stop-color="#a56bff"/><stop offset="1" stop-color="#5b2bc4"/></radialGradient><linearGradient id="ofg" x1=".8" y1="0" x2=".2" y2="1"><stop offset="0" stop-color="#ffe14a"/><stop offset=".4" stop-color="#ff9a1f"/><stop offset="1" stop-color="#f0306a"/></linearGradient></defs><circle cx="10.500" cy="9.500" r="8" fill="url(#ofp)"/><path d="M3.500 3.500c-.3 1 0 1.800.3 2.500C2 8 1 10.500 1.800 13.500c1 3.800 4.500 6 8.300 6 5 0 9-3.800 9-8.800 0-1.500-.4-3-1.100-4.200.3 1.500 0 3-.4 3.600-.2-2-1.200-3.200-2.400-4 .8 2 .4 4.500-1.200 6-1.800 1.700-4.600 1.700-6.200.4-1.300-1-1.800-2.600-1.100-4 .5-1 1.500-1.700 2.700-1.800-.6-.8-1.800-1.100-2.900-.8C5.200 6 4 5 3.500 3.500z" fill="url(#ofg)"/></svg>
<svg style="left:166px;top:105px;" width="20" height="20" viewBox="0 0 20 20"><path d="M8.600 1.500h2.800l.6 2.500 1.400.6 2.200-1.400 2 2-1.400 2.200.6 1.400 2.500.6v2.800l-2.500.6-.6 1.400 1.400 2.200-2 2-2.200-1.400-1.400.6-.6 2.500H8.600L8 17.600 6.600 17l-2.200 1.400-2-2 1.400-2.200-.6-1.400L.7 12.200V9.400l2.500-.6.6-1.400L2.400 5.200l2-2 2.200 1.400L8 4z" transform="translate(0 -.8)" fill="none" stroke="#fbfbfe" stroke-width="1.500" stroke-linejoin="round"/><circle cx="10" cy="10" r="3" fill="none" stroke="#fbfbfe" stroke-width="1.500"/></svg>
<svg style="left:302.5px;top:104.5px;" width="20" height="20" viewBox="0 0 20 20"><circle cx="10" cy="10" r="8.600" fill="none" stroke="#fbfbfe" stroke-width="1.500"/><ellipse cx="10" cy="10" rx="3.800" ry="8.600" fill="none" stroke="#fbfbfe" stroke-width="1.400"/><path d="M1.500 10h17" stroke="#fbfbfe" stroke-width="1.400"/></svg>
<svg style="left:734.5px;top:104.5px;" width="20" height="20" viewBox="0 0 20 20"><circle cx="10" cy="10" r="8.600" fill="none" stroke="#fbfbfe" stroke-width="1.500"/><ellipse cx="10" cy="10" rx="3.800" ry="8.600" fill="none" stroke="#fbfbfe" stroke-width="1.400"/><path d="M1.500 10h17" stroke="#fbfbfe" stroke-width="1.400"/></svg>
<svg style="left:408px;top:104px;" width="20" height="20" viewBox="0 0 20 20"><rect width="20" height="20" fill="#f3262d"/><rect y="14.500" width="20" height="5.500" fill="#fff"/><path d="M3 17l3-1.500h3l1 1 1-1h3l3 1.500" fill="none" stroke="#f3262d" stroke-width="1.200"/><text x="10" y="12.800" font-family="Liberation Sans" font-weight="bold" font-size="13.500" fill="#111" text-anchor="middle" letter-spacing="-.5">LC</text></svg>
<svg style="left:588px;top:104px;" width="21" height="19" viewBox="0 0 21 19"><path d="M1.500 3.500A1.700 1.700 0 0 1 3.200 1.800h4.300l2.200 2.400h8A1.700 1.700 0 0 1 19.400 5.900v9.600a1.700 1.700 0 0 1-1.700 1.700H3.200a1.700 1.700 0 0 1-1.700-1.700z" fill="none" stroke="#fbfbfe" stroke-width="1.500" stroke-linejoin="round"/></svg>
<svg style="left:939px;top:103.5px;" width="14" height="14" viewBox="0 0 14 14"><defs><linearGradient id="tbg" x1="0" y1="0" x2="1" y2="1"><stop offset="0" stop-color="#62b4ff"/><stop offset="1" stop-color="#1c5fd0"/></linearGradient></defs><path d="M7 .5c3.600 0 6.500 2.700 6.500 6.300S10.600 13.500 7 13.500.5 10.700.5 7c0-1.500.5-2.800 1.300-3.900C3 1.500 4.800.5 7 .5z" fill="url(#tbg)"/><path d="M1.800 5.800c1-2.500 4.200-3.800 7-2.500-1.800-.2-3.300.5-4.300 1.800z" fill="#a8d6ff"/><path d="M2.300 5.800l4.500 2.600 4.500-2.600V10.500H2.300z" fill="#fff"/><path d="M2.300 5.800L6.800 4l4.500 1.800-4.500 2.600z" fill="#dce9f8"/></svg>
<svg style="left:945px;top:109px;" width="14.8" height="14.8" viewBox="0 0 20 20"><defs><linearGradient id="ffgc" x1="0.800" y1="0.050" x2="0.250" y2="0.950"><stop offset="0" stop-color="#fff44f"/><stop offset=".3" stop-color="#ffb224"/><stop offset=".6" stop-color="#ff6a2e"/><stop offset=".85" stop-color="#ff3355"/><stop offset="1" stop-color="#e9119a"/></linearGradient><radialGradient id="ffpc" cx=".6" cy=".3" r=".8"><stop offset="0" stop-color="#b25cff"/><stop offset=".6" stop-color="#6a3be0"/><stop offset="1" stop-color="#4428b8"/></radialGradient><linearGradient id="ffhc" x1="0" y1="0" x2="1" y2="1"><stop offset="0" stop-color="#ff9a1a"/><stop offset="1" stop-color="#ffd43a"/></linearGradient></defs><path d="M12.300.400c.300 1.700 2 2.900 3.300 4.400.800-.300 1.200-.900 1.100-1.700 2 2 3.100 4.700 2.900 7.600-.400 5-4.500 8.800-9.500 8.800S.600 15.600.600 10.600c0-2.200.700-4.100 1.900-5.600.1.800.3 1.400.700 1.900.2-1.500.9-2.600 1.900-3.400 0 .700.200 1.300.600 1.800 1.700-.300 4.200-1.300 6.600-4.900z" fill="url(#ffgc)"/><circle cx="9.600" cy="10.800" r="4.700" fill="url(#ffpc)"/><path d="M3.300 7.200c1.100-.700 2.500-.700 3.500-.2.600-.700 1.700-1 2.800-.8-.9.500-1.300 1.300-1.200 2.100 1.100.3 2 .100 2.600-.400-.200 1.500-1.400 2.500-2.900 2.600-1.300.1-2-.600-3.200-.400-.800.100-1.300.500-1.600 1.100-.500-1.300-.500-2.800 0-4z" fill="url(#ffhc)"/></svg>
<svg style="left:1165px;top:104px;" width="20" height="20" viewBox="0 0 20 20"><rect width="20" height="20" fill="#fff"/><g stroke="#8cc21a" stroke-width="4" stroke-linecap="butt"><path d="M10 10.500V1.500"/><path d="M10 10.500L1.800 7.600"/><path d="M10 10.500L18.200 7.600"/><path d="M10 10.500L4.600 18.500"/><path d="M10 10.500L15.400 18.500"/></g></svg>
<svg style="left:1199px;top:197px;" width="14" height="14" viewBox="0 0 14 14"><path d="M1 7h12" stroke="#fff" stroke-width="1.200"/></svg>
<svg style="left:1277px;top:197px;" width="14" height="14" viewBox="0 0 14 14"><rect x="1.100" y="1.100" width="11.800" height="11.800" fill="none" stroke="#fff" stroke-width="1.200"/></svg>
<svg style="left:1356px;top:197px;" width="14" height="14" viewBox="0 0 14 14"><path d="M1 1l12 12M13 1L1 13" stroke="#fff" stroke-width="1.200"/></svg>
<svg style="left:67.5px;top:241px;" width="31" height="28.5" viewBox="0 0 30 27.5"><path d="M12 2C8.500 2 7.500 3.500 7.500 6v4c0 2-1 3-3.500 3.500C6.500 14 7.500 15 7.500 17v4c0 2.500 1 4 4.500 4M18 2c3.500 0 4.500 1.500 4.500 4v4c0 2 1 3 3.500 3.500-2.500.5-3.500 1.500-3.500 3.500v4c0 2.500-1 4-4.500 4" fill="none" stroke="#fff" stroke-width="3.600" stroke-linecap="round" stroke-linejoin="round"/></svg>
<svg style="left:295.5px;top:238.5px;" width="33" height="31" viewBox="0 0 32 30"><path d="M5.600 21.500A12.500 12.500 0 1 1 26.400 21.500" fill="none" stroke="#a4a4a6" stroke-width="3.200" stroke-linecap="round"/><path d="M16 23.500L20.300 12" stroke="#a4a4a6" stroke-width="2.400" stroke-linecap="round"/><circle cx="15.800" cy="24" r="3.600" fill="#a4a4a6"/></svg>
<svg style="left:1258px;top:242.5px;" width="24" height="24" viewBox="0 0 24 24"><circle cx="12" cy="12" r="11.200" fill="#ff3b6b"/><path d="M12 5.500v8" stroke="#0c0c0d" stroke-width="3" stroke-linecap="round"/><circle cx="12" cy="18" r="1.900" fill="#0c0c0d"/></svg>
<svg style="left:1315px;top:241.5px;" width="32" height="28" viewBox="0 0 32 28"><rect x="2" y="2" width="27" height="23" rx="4" fill="none" stroke="#b1b1b3" stroke-width="3.200"/><path d="M2 9.500h27M10.500 9.500V25" stroke="#b1b1b3" stroke-width="2.600"/></svg>
<svg style="left:1363px;top:250px;" width="32" height="10" viewBox="0 0 32 10"><circle cx="4.500" cy="5" r="3.300" fill="#c4c4c6"/><circle cx="16" cy="5" r="3.300" fill="#c4c4c6"/><circle cx="27.500" cy="5" r="3.300" fill="#c4c4c6"/></svg>
<svg style="left:23px;top:301.2px;" width="14" height="10" viewBox="0 0 14 10"><path d="M1 1.500h11.500L6.700 8z" fill="#8f8f94"/></svg>
<svg style="left:23px;top:329.2px;" width="14" height="10" viewBox="0 0 14 10"><path d="M1 1.500h11.500L6.700 8z" fill="#8f8f94"/></svg>
<div style="left:173px;top:291px;width:14px;height:26px;background:transparent;border:1px solid #5a5a60;"></div>
<div style="left:101px;top:347px;width:13px;height:26px;background:transparent;border:1px solid #6a6f7a;"></div>
<div style="left:113.5px;top:347px;width:1.5px;height:27px;background:#ffffff;"></div>
<svg style="left:50.85px;top:831.65px;" width="19.5" height="19.5" viewBox="0 0 20 20"><path d="M8.600 1.500h2.800l.6 2.500 1.400.6 2.200-1.400 2 2-1.400 2.200.6 1.400 2.500.6v2.800l-2.500.6-.6 1.400 1.400 2.200-2 2-2.200-1.400-1.400.6-.6 2.500H8.600L8 17.600 6.600 17l-2.200 1.400-2-2 1.400-2.200-.6-1.400L.7 12.200V9.400l2.500-.6.6-1.400L2.400 5.200l2-2 2.200 1.400L8 4z" transform="translate(0 -.8)" fill="none" stroke="#fbfbfe" stroke-width="1.500" stroke-linejoin="round"/><circle cx="10" cy="10" r="3" fill="none" stroke="#fbfbfe" stroke-width="1.500"/></svg>
<svg style="left:51px;top:876px;" width="20" height="20" viewBox="0 0 20 20"><circle cx="10" cy="10" r="8.700" fill="none" stroke="#fbfbfe" stroke-width="1.500"/><path d="M7.300 8a2.800 2.800 0 1 1 4 2.500c-.9.500-1.300 1-1.300 2" fill="none" stroke="#fbfbfe" stroke-width="1.500" stroke-linecap="round"/><circle cx="10" cy="14.700" r="1" fill="#fbfbfe"/></svg>
<div style="left:1891px;top:932px;width:21px;height:21px;background:#18171d;"></div>
<svg style="left:1895px;top:938px;" width="13" height="10" viewBox="0 0 13 10"><path d="M1.300 1.800l5.200 5.200 5.200-5.200" fill="none" stroke="#5c5b66" stroke-width="2.200"/></svg>
<svg style="left:1903px;top:137px;" width="9" height="10" viewBox="0 0 9 10"><path d="M-4 8.500l5.200-5.200 5.200 5.200" fill="none" stroke="#5c5b66" stroke-width="2.200"/></svg>
<svg style="left:3px;top:962px;" width="22" height="14" viewBox="0 0 22 14"><path d="M0 3.200l9-1.300v9.600H0zM10.300 1.700L21 0v11.500H10.300zM0 12.800h9V14H0zM10.300 12.800H21V14H10.300z" fill="#fff"/></svg>
<svg style="left:53px;top:961px;" width="20" height="15" viewBox="0 0 20 15"><path d="M2 5l8-3.500L18 5v10H2z" fill="#7a4fb0"/><rect x="1" y="4" width="5" height="11" fill="#d02a2a"/><rect x="1" y="10" width="5" height="5" fill="#2a6fd0"/><path d="M6.500 2l5-1.500v9l-5 1.500z" fill="#e8c81c"/><path d="M11 6l5-2.500v6L11 12z" fill="#3aa83a"/><rect x="14" y="9" width="5" height="6" fill="#b05cc0"/><path d="M6.500 9l4.500 1v5H6.500z" fill="#2a9ad0"/></svg>
<svg style="left:98px;top:963px;" width="22" height="13" viewBox="0 0 22 13"><rect x="1.500" y="1" width="19.500" height="12" fill="#e8ecef" stroke="#aeb4ba" stroke-width="1"/><path d="M4 8.500l3.500-3.500 3.500 3 3.500-3.500 4 4" fill="none" stroke="#2a7fd4" stroke-width="1.300"/><rect x="0" y="5" width="2.500" height="3" fill="#4caf50"/></svg>
<svg style="left:148px;top:961.5px;" width="16" height="14" viewBox="0 0 18 15.75"><path d="M3 15A8 8 0 0 1 9 1.200a8 8 0 0 1 6.500 12.500" fill="none" stroke="#e03a10" stroke-width="2.600"/><rect x="7.200" y="2.500" width="3.600" height="12.500" fill="#c9c9c9" stroke="#7a7a7a" stroke-width=".5"/><path d="M2.500 14.800h4" stroke="#2a6fd0" stroke-width="1.500"/></svg>
<svg style="left:188px;top:961px;" width="22" height="15" viewBox="0 0 22 15"><circle cx="11" cy="11" r="10" fill="#2f7fe4"/><path d="M3 6C6 1 14 0 18.500 4c-4-1.500-8-1-11 1.500z" fill="#6cb6ff"/><path d="M4 8.500l7 4 7-4V15H4z" fill="#fff"/><path d="M4 8.500l7-3 7 3-7 4z" fill="#e4eefb"/></svg>
<svg style="left:391px;top:961px;" width="22" height="15" viewBox="0 0 22 15"><defs><linearGradient id="edg" x1="0" y1="0" x2="1" y2="0"><stop offset="0" stop-color="#1b6fd8"/><stop offset=".55" stop-color="#28b8d8"/><stop offset="1" stop-color="#52d267"/></linearGradient></defs><path d="M1 12C1 5.500 5.500 1 11 1s10 4 10 9.500c0 2-1 3.500-3 4.500H1z" fill="url(#edg)"/><path d="M5 15c-1-4 2-7 6-7 2.500 0 4 1.200 4 3 0 1-.6 1.800-1.500 2 1-2-1-3.500-3.500-3-2 .4-3 2.500-2.500 5z" fill="#0c4a9c"/><path d="M11 10.500c1.500 0 2.500.8 2.500 2 0 1-.7 2-2 2.500H9.500c-.5-2.500 0-4.500 1.500-4.500z" fill="#1c1b22" opacity=".55"/></svg>
<svg style="left:439px;top:963px;" width="19" height="13" viewBox="0 0 19 13"><path d="M0 1.500h7l1.500 2H18.500V13H0z" fill="#f5b92e"/><path d="M0 4.500h18.500V13H0z" fill="#ffd765"/><rect x="4.500" y="8.500" width="9.500" height="4.500" fill="#2a8be0"/><rect x="6.500" y="10.500" width="5.500" height="2.500" fill="#ffd765"/></svg>
<svg style="left:484px;top:962px;" width="21" height="15" viewBox="0 0 21 15"><rect x=".5" y=".5" width="20" height="15" rx="2" fill="#d98f3c" stroke="#f0c48c" stroke-width="1"/><circle cx="12.500" cy="7.500" r="3.200" fill="none" stroke="#fff" stroke-width="1.800"/><path d="M10.200 9.800L5 15" stroke="#fff" stroke-width="1.800"/></svg>
<svg style="left:530px;top:961px;" width="19" height="15" viewBox="0 0 19 15"><path d="M2 1.500h11l4 3.500v10H2z" fill="#f2f2ee" stroke="#9aa0a6" stroke-width=".8"/><rect x="2.500" y="7.500" width="12" height="7.500" fill="#b9d24a"/><path d="M5 9v5M7.500 10.500v3.500M10 11.500v2M12 12v1.500" stroke="#3c4a10" stroke-width="1.200"/><path d="M17.500.5L12 13" stroke="#e09a20" stroke-width="2"/><circle cx="17.800" cy=".8" r="1" fill="#d03030"/></svg>
<svg style="left:575px;top:961px;" width="22" height="15" viewBox="0 0 22 15"><circle cx="11" cy="11" r="10.300" fill="#2fb822"/><path d="M6.500 11l3.500 3.500 6-6.500" fill="none" stroke="#fff" stroke-width="2.200"/></svg>
<svg style="left:623px;top:962.5px;" width="14" height="14" viewBox="0 0 14 14"><path d="M3.500 1.800l7-1.300 2.500 13.500H1.500z" fill="#f0f0f0" stroke="#8a8a8a" stroke-width=".6"/><path d="M7.500 5.500c1.300 1.500 2.500 2.500 2.500 3.800 0 1-.8 1.600-1.700 1.400l.5 1.600H6.200l.5-1.600c-.9.200-1.700-.4-1.700-1.400 0-1.300 1.200-2.300 2.500-3.800z" fill="#3a3a3a"/></svg>
<svg style="left:667px;top:962px;" width="20" height="15" viewBox="0 0 20 15"><path d="M3.500 2.500h14L15 15H1z" fill="#a9d4ee"/><path d="M4.500 4h12M4 6.500h12M3.600 9h12M3.200 11.500h12M2.800 14h12" stroke="#7fb2d6" stroke-width=".8"/><path d="M5 .5v3M7.500 .5v3M10 .5v3M12.500 .5v3M15 .5v3" stroke="#cfd6dc" stroke-width="1"/></svg>
<svg style="left:870px;top:962px;" width="19" height="14" viewBox="0 0 19 14"><rect x=".5" y=".5" width="18" height="14" fill="#e4e4e4" stroke="#9a9a9a" stroke-width="1"/><text x="9.500" y="16" font-family="Liberation Serif" font-weight="bold" font-size="18" fill="#e01010" text-anchor="middle">D</text></svg>
<svg style="left:915px;top:964px;" width="19" height="12" viewBox="0 0 19 12"><rect x=".5" y=".5" width="18" height="12" rx="1.500" fill="#ef3560"/><rect x="3.200" y="2.200" width="12.600" height="10" fill="#4a4a4e"/><path d="M3.200 2.200h12.600L3.200 9z" fill="#77777c"/><path d="M1.800 3v1.200M1.800 6v1.200M1.800 9v1.200M17.200 3v1.200M17.200 6v1.200M17.200 9v1.200" stroke="#ffd0da" stroke-width="1"/></svg>
<svg style="left:962px;top:962px;" width="18" height="14" viewBox="0 0 18 14"><path d="M1 4l2.500-2.500h5L9.500 3H16.500v11H1z" fill="#c4c7ca" stroke="#7f8386" stroke-width=".8"/><circle cx="9.500" cy="10.500" r="4.300" fill="#5c6064" stroke="#e8e8e8" stroke-width="1"/><circle cx="9.500" cy="10.500" r="2" fill="#26282a"/></svg>
<svg style="left:1004px;top:961px;" width="20" height="15" viewBox="0 0 20 15"><path d="M2 1l4 3.500c1.500-.8 5.500-.8 7 0L17.500 0l.5 7c.8 2 .5 5-1 8H2.500C.8 12 .8 9.500 1.800 7z" fill="#f26a0c"/><path d="M5.500 14l4-3.500 4 3.500z" fill="#fff"/><path d="M2 1l2.800 4.800L3 6.200zM17.500 0l-2.800 5.500 2.300.6z" fill="#b84808"/><path d="M5.500 8.500l2.200.8M13.500 8.500l-2.200.8" stroke="#40200a" stroke-width="1"/><path d="M16.500 6l2.500 1.500-2 1z" fill="#fff"/></svg>
<svg style="left:1204px;top:961px;" width="20" height="15" viewBox="0 0 20 15"><path d="M2 1l4 3.500c1.500-.8 5.500-.8 7 0L17.500 0l.5 7c.8 2 .5 5-1 8H2.500C.8 12 .8 9.500 1.800 7z" fill="#f26a0c"/><path d="M5.500 14l4-3.500 4 3.500z" fill="#fff"/><path d="M2 1l2.800 4.800L3 6.200zM17.500 0l-2.800 5.500 2.300.6z" fill="#b84808"/><path d="M5.500 8.500l2.200.8M13.500 8.500l-2.200.8" stroke="#40200a" stroke-width="1"/><path d="M16.500 6l2.500 1.500-2 1z" fill="#fff"/></svg>
<svg style="left:1404.5px;top:960.5px;" width="21" height="21" viewBox="0 0 20 20"><defs><linearGradient id="ffgt" x1="0.800" y1="0.050" x2="0.250" y2="0.950"><stop offset="0" stop-color="#fff44f"/><stop offset=".3" stop-color="#ffb224"/><stop offset=".6" stop-color="#ff6a2e"/><stop offset=".85" stop-color="#ff3355"/><stop offset="1" stop-color="#e9119a"/></linearGradient><radialGradient id="ffpt" cx=".6" cy=".3" r=".8"><stop offset="0" stop-color="#b25cff"/><stop offset=".6" stop-color="#6a3be0"/><stop offset="1" stop-color="#4428b8"/></radialGradient><linearGradient id="ffht" x1="0" y1="0" x2="1" y2="1"><stop offset="0" stop-color="#ff9a1a"/><stop offset="1" stop-color="#ffd43a"/></linearGradient></defs><path d="M12.300.400c.300 1.700 2 2.900 3.300 4.400.800-.300 1.200-.900 1.100-1.700 2 2 3.100 4.700 2.900 7.600-.400 5-4.500 8.800-9.500 8.800S.600 15.600.600 10.600c0-2.200.700-4.100 1.900-5.600.1.800.3 1.400.700 1.900.2-1.500.9-2.600 1.900-3.400 0 .700.200 1.300.600 1.800 1.700-.300 4.200-1.300 6.600-4.900z" fill="url(#ffgt)"/><circle cx="9.600" cy="10.800" r="4.700" fill="url(#ffpt)"/><path d="M3.300 7.200c1.100-.700 2.500-.700 3.500-.2.600-.700 1.700-1 2.800-.8-.9.500-1.300 1.300-1.200 2.100 1.100.3 2 .100 2.600-.400-.200 1.500-1.400 2.500-2.900 2.600-1.300.1-2-.600-3.200-.400-.800.100-1.300.500-1.600 1.100-.500-1.300-.500-2.800 0-4z" fill="url(#ffht)"/></svg>
<svg style="left:1661px;top:965px;" width="19" height="11" viewBox="0 0 19 11"><path d="M1.200 10.800l8.300-8.300 8.300 8.300" fill="none" stroke="#fff" stroke-width="1.400"/></svg>
<svg style="left:1690px;top:964px;" width="22" height="12" viewBox="0 0 22 12"><rect x="6" y="3" width="15" height="9" fill="none" stroke="#fff" stroke-width="1.300"/><rect x="8" y="5" width="11" height="7" fill="#fff"/><path d="M2.500 0v3M5 0v3" stroke="#fff" stroke-width="1.200"/><path d="M1 3h5.500v3.500a2.700 2.700 0 0 1-5.500 0zM3.700 9v3" fill="#fff" stroke="#fff" stroke-width="1"/></svg>
<svg style="left:1720px;top:963px;" width="22" height="13" viewBox="0 0 22 13"><rect x="6" y="1" width="15" height="12" fill="none" stroke="#fff" stroke-width="1.300"/><rect x="1" y="1" width="5" height="7" fill="none" stroke="#fff" stroke-width="1.200"/><path d="M3.500 8v5" stroke="#fff" stroke-width="1.200"/><rect x="2.600" y="2.600" width="1.800" height="1.800" fill="#fff"/></svg>
<svg style="left:1751px;top:964px;" width="21" height="12" viewBox="0 0 21 12"><path d="M1 7.500h3.500L9 3v9" fill="none" stroke="#fff" stroke-width="1.300"/><path d="M11.500 7.500c1 1 1 3 0 4.500" fill="none" stroke="#fff" stroke-width="1.200"/><path d="M14 4.500c2.200 2.200 2.200 6 0 8" fill="none" stroke="#9aa0a4" stroke-width="1.100"/><path d="M16.500 2c3.500 3.500 3.500 9 0 11" fill="none" stroke="#6f757a" stroke-width="1.100"/></svg>
<div style="left:1861px;top:962px;width:20px;height:20px;background:transparent;border:1.400px solid #fff;"></div>
</div></body></html>
